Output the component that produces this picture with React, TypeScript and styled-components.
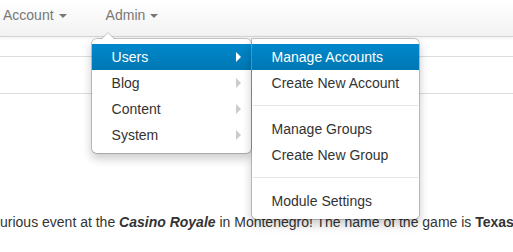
import React from "react";
import styled, { createGlobalStyle, css } from "styled-components";

const GlobalStyle = createGlobalStyle`
  html, body { margin: 0; padding: 0; background: #fff; }
  body {
    font-family: "Liberation Sans", Arial, sans-serif;
    font-size: 14px;
    line-height: 20px;
    color: #333;
    overflow: hidden;
    width: 513px;
    height: 252px;
  }
  * { box-sizing: border-box; }
`;

const Page = styled.div`
  position: relative;
  width: 513px;
  height: 252px;
  overflow: hidden;
`;

const Navbar = styled.div`
  position: relative;
  z-index: 10;
  height: 37px;
  background: linear-gradient(to bottom, #ffffff, #f2f2f2);
  border-bottom: 1px solid #d4d4d4;
  box-shadow: 0 1px 4px rgba(0, 0, 0, 0.065);
`;

const Nav = styled.ul`
  display: flex;
  gap: 9px;
  list-style: none;
  margin: 0 0 0 -12px;
  padding: 0;
  height: 36px;
`;

const NavItem = styled.li`
  position: relative;
  height: 36px;
`;

const NavLink = styled.a`
  display: flex;
  align-items: center;
  height: 30px;
  padding: 0 15px;
  color: #777;
  text-decoration: none;
  white-space: nowrap;
  cursor: pointer;
`;

const Caret = styled.span`
  display: inline-block;
  width: 0;
  height: 0;
  margin-left: 5px;
  margin-top: 1px;
  border-top: 4px solid #777;
  border-left: 4px solid transparent;
  border-right: 4px solid transparent;
`;

const Menu = styled.ul<{ $sub?: boolean }>`
  position: absolute;
  list-style: none;
  margin: 0;
  padding: 5px 0;
  background: #fff;
  border: 1px solid rgba(0, 0, 0, 0.2);
  box-shadow: 0 5px 10px rgba(0, 0, 0, 0.2);
  background-clip: padding-box;
  z-index: 20;
  ${(p) =>
    p.$sub
      ? css`
          top: -6px;
          left: 100%;
          width: 169px;
          border-radius: 0 6px 6px 6px;
        `
      : css`
          top: 38px;
          left: 0;
          width: 161px;
          border-radius: 6px;
          &::before {
            content: "";
            position: absolute;
            top: -7px;
            left: 9px;
            border-left: 7px solid transparent;
            border-right: 7px solid transparent;
            border-bottom: 7px solid rgba(0, 0, 0, 0.2);
          }
          &::after {
            content: "";
            position: absolute;
            top: -6px;
            left: 10px;
            border-left: 6px solid transparent;
            border-right: 6px solid transparent;
            border-bottom: 6px solid #fff;
          }
        `}
`;

const MenuItem = styled.li`
  position: relative;
`;

const MenuLink = styled.a<{ $active?: boolean }>`
  display: block;
  padding: 3px 20px;
  line-height: 20px;
  white-space: nowrap;
  color: #333;
  text-decoration: none;
  cursor: pointer;
  ${(p) =>
    p.$active &&
    css`
      color: #fff;
      background: linear-gradient(to bottom, #0088cc, #0077b3);
    `}
`;

const SubArrow = styled.span<{ $active?: boolean }>`
  position: absolute;
  right: 10px;
  top: 8px;
  width: 0;
  height: 0;
  border-top: 5px solid transparent;
  border-bottom: 5px solid transparent;
  border-left: 5px solid ${(p) => (p.$active ? "#fff" : "#ccc")};
`;

const Divider = styled.li`
  box-sizing: content-box;
  height: 1px;
  margin: 9px 1px;
  background: #e5e5e5;
  border-bottom: 1px solid #fff;
  overflow: hidden;
`;

const Content = styled.div`
  display: block;
`;

const Row = styled.div<{ $h: number }>`
  box-sizing: content-box;
  height: ${(p) => p.$h}px;
  border-bottom: 1px solid #dddddd;
`;

const Para = styled.p`
  margin: 118px 0 0 -7px;
  white-space: nowrap;
  font-size: 14px;
  line-height: 20px;
  color: #333;
`;

const mainItems = [
  { label: "Users", active: true },
  { label: "Blog" },
  { label: "Content" },
  { label: "System" },
];

export default function App() {
  return (
    <Page>
      <GlobalStyle />
      <Navbar>
        <Nav>
          <NavItem>
            <NavLink>
              Account <Caret />
            </NavLink>
          </NavItem>
          <NavItem>
            <NavLink>
              Admin <Caret />
            </NavLink>
            <Menu>
              {mainItems.map((it) => (
                <MenuItem key={it.label}>
                  <MenuLink $active={it.active}>{it.label}</MenuLink>
                  <SubArrow $active={it.active} />
                  {it.active && (
                    <Menu $sub>
                      <MenuItem>
                        <MenuLink $active>Manage Accounts</MenuLink>
                      </MenuItem>
                      <MenuItem>
                        <MenuLink>Create New Account</MenuLink>
                      </MenuItem>
                      <Divider />
                      <MenuItem>
                        <MenuLink>Manage Groups</MenuLink>
                      </MenuItem>
                      <MenuItem>
                        <MenuLink>Create New Group</MenuLink>
                      </MenuItem>
                      <Divider />
                      <MenuItem>
                        <MenuLink>Module Settings</MenuLink>
                      </MenuItem>
                    </Menu>
                  )}
                </MenuItem>
              ))}
            </Menu>
          </NavItem>
        </Nav>
      </Navbar>
      <Content>
        <Row $h={19} />
        <Row $h={36} />
        <Para>
          curious event at the <b><i>Casino Royale</i></b> in Montenegro! The
          name of the game is <b>Texas</b> Hold'em
        </Para>
      </Content>
    </Page>
  );
}
